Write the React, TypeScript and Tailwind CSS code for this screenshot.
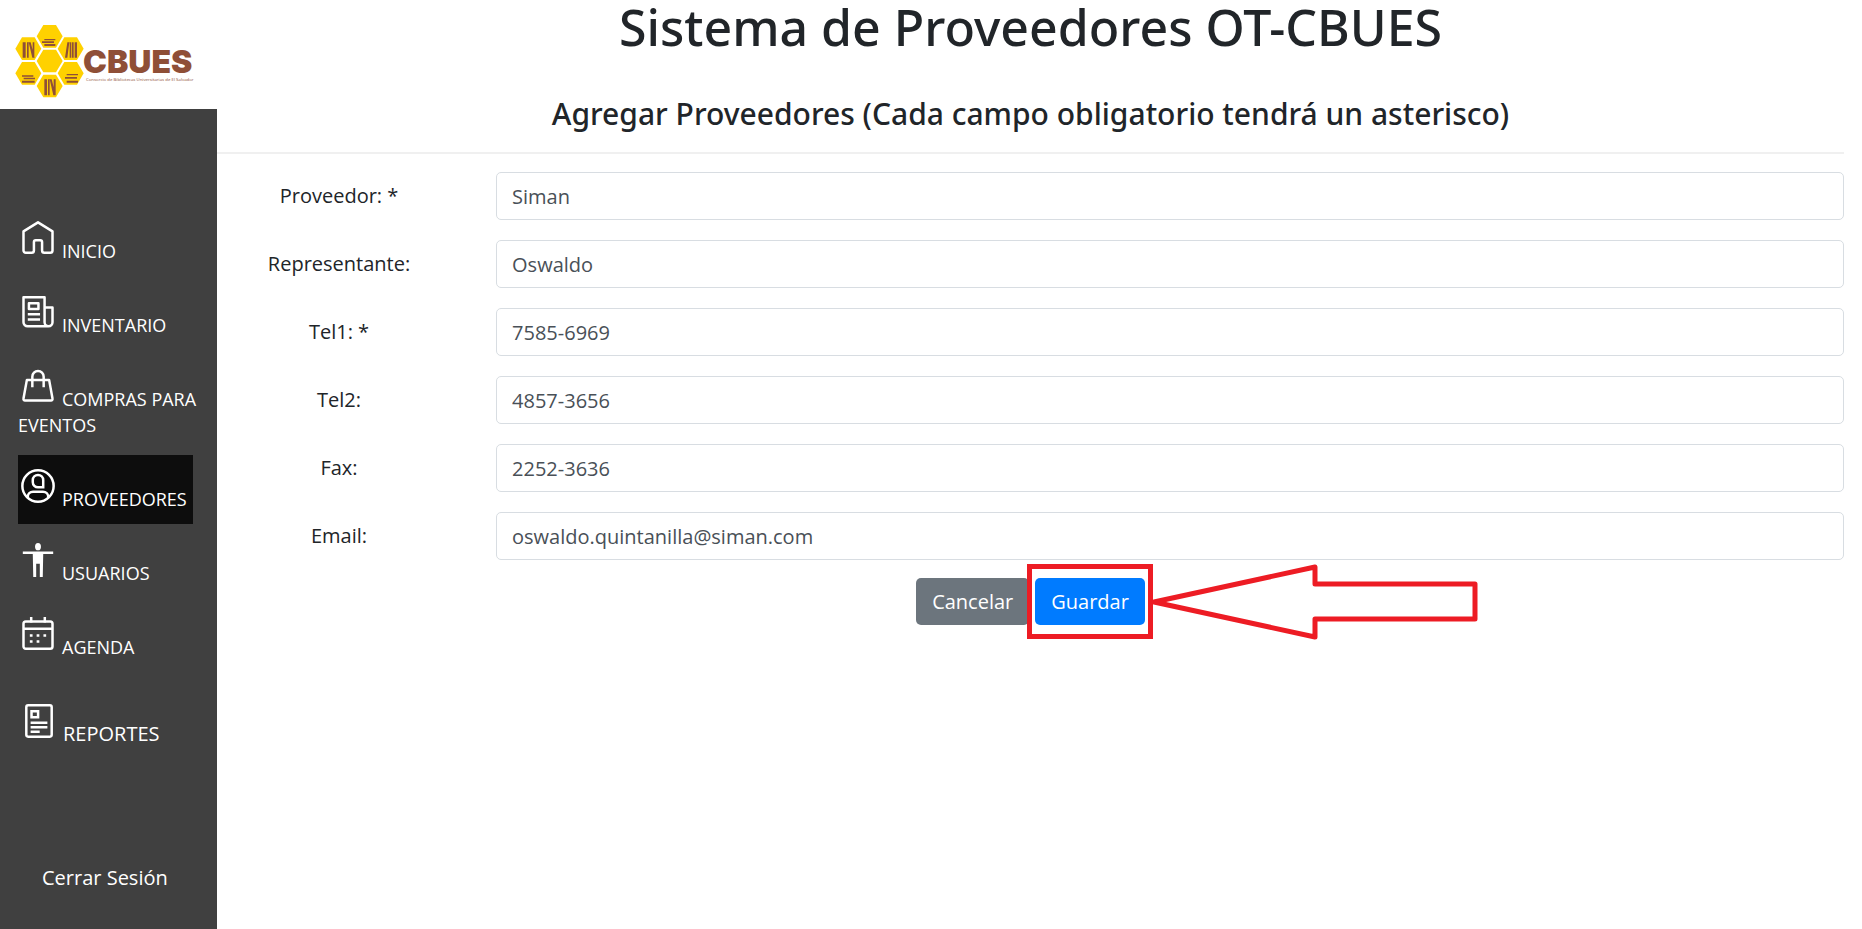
import type { ReactNode } from "react";

const HEXAGONS = [
  [149, 109],
  [85, 146],
  [212, 146],
  [149, 183],
  [85, 220],
  [212, 220],
  [149, 258],
];

function Logo() {
  return (
    <svg viewBox="0 0 651 327" className="h-[109px] w-[217px]" role="img" aria-label="CBUES">
      <g fill="#ffd100">
        {HEXAGONS.map(([x, y]) => (
          <path key={`${x}-${y}`} d={`M${x - 39} ${y}l20 -34h38l20 34l-20 34h-38z`} />
        ))}
      </g>
      <g fill="#8f4f37">
        <path d="M133 117h33v4h-33zM126 124h36v5h-36zM133 132h33v6h-33z" />
        <path d="M68 127h9v46h-9zM81 127h5v46h-5zM86 127h6l12 46h-7zM98 127h5v46h-5z" />
        <path d="M202 127h6l-6 46h-7zM209 127h5v46h-5zM216 127h5v46h-5zM224 127h7v46h-7z" />
        <path d="M66 226h34v4h-34zM71 233h34v5h-34zM66 242h38v6h-38z" />
        <path d="M200 222h34v4h-34zM195 231h36v5h-36zM200 242h34v6h-34z" />
        <path d="M133 238h8v48h-8zM144 238h5v48h-5zM149 238h6l12 48h-7zM161 238h6v48h-6z" />
        <text x="249" y="219" fontSize="96" fontWeight="900" fontFamily="Inter, sans-serif">
          CBUES
        </text>
        <text x="258" y="242" fontSize="13" fontFamily="'Liberation Sans Narrow', 'Open Sans', sans-serif">
          Consorcio de Bibliotecas Universitarias de El Salvador
        </text>
      </g>
    </svg>
  );
}

function Icon({ children }: { children: ReactNode }) {
  return (
    <svg
      viewBox="0 0 15 15"
      fill="none"
      stroke="currentColor"
      strokeWidth="1.1"
      aria-hidden="true"
      className="mr-[7px] ml-[3px] inline-block size-[34px] align-[3px]"
    >
      {children}
    </svg>
  );
}

const homeIcon = (
  <Icon>
    <path
      strokeLinejoin="round"
      d="M7.5.6L1.1 4.6v8.4a1 1 0 0 0 1 1h2.6a1 1 0 0 0 1-1V9.3a.8.8 0 0 1 .8-.8h2a.8.8 0 0 1 .8.8V13a1 1 0 0 0 1 1h2.6a1 1 0 0 0 1-1V4.6z"
    />
  </Icon>
);
const newsIcon = (
  <Icon>
    <path
      strokeLinejoin="round"
      d="M10.4 5.5h3.5V12a1.7 1.7 0 0 1-3.5 0V1H1.1v11a1.8 1.8 0 0 0 1.8 1.8h9.3M3.5 3.6h4.2v2.6H3.5zM3 8.5h5.4M3 10.8h5.4"
    />
  </Icon>
);
const bagIcon = (
  <Icon>
    <path strokeLinejoin="round" d="M2.6 4.8h9.8l1.5 8.2a.7.7 0 0 1-.7.9H1.8a.7.7 0 0 1-.7-.9zM5 8V3.4a2.5 2.5 0 0 1 5 0V8" />
  </Icon>
);
const userIcon = (
  <Icon>
    <circle cx="7.5" cy="7.5" r="6.9" />
    <path d="M3 12.6v-.4c0-1.3 1-2.2 2.3-2.2h4.4c1.3 0 2.3.9 2.3 2.2v.4M5.2 4.9a2.3 2.3 0 0 1 4.6 0v3.2H7.5a2.3 2.3 0 0 1-2.3-2.3z" />
  </Icon>
);
const personIcon = (
  <Icon>
    <ellipse cx="7.5" cy="1.6" rx="1.3" ry="1.6" fill="currentColor" stroke="none" />
    <path
      fill="currentColor"
      stroke="none"
      d="M.8 3.7h13.4v1.2H9.8L9.6 15H8.3V9.2H6.7V15H5.4L5.2 4.9H.8z"
    />
  </Icon>
);
const calendarIcon = (
  <Icon>
    <rect x="1.1" y="2" width="12.8" height="12" rx="1" />
    <path d="M4.5 0v2.4M10.5 0v2.4M1 5.2h13M3.9 8.2h1.2M6.9 8.2h1.2M9.9 8.2h1.2M3.9 10.8h1.2M6.9 10.8h1.2" />
  </Icon>
);
const reportIcon = (
  <Icon>
    <rect x="1.9" y=".6" width="11.2" height="13.8" rx=".8" />
    <path d="M4.2 3.2h2.9v2.6H4.2zM3.8 8.3h7.4M3.8 10.3h7.4M3.8 12.2h4" />
  </Icon>
);

const NAV = [
  { label: "INICIO", icon: homeIcon },
  { label: "INVENTARIO", icon: newsIcon },
  { label: "COMPRAS PARA EVENTOS", icon: bagIcon },
  { label: "PROVEEDORES", icon: userIcon, active: true },
  { label: "USUARIOS", icon: personIcon },
  { label: "AGENDA", icon: calendarIcon },
];

const FIELDS = [
  { id: "proveedor", label: "Proveedor: *", value: "Siman" },
  { id: "representante", label: "Representante:", value: "Oswaldo" },
  { id: "tel1", label: "Tel1: *", value: "7585-6969" },
  { id: "tel2", label: "Tel2:", value: "4857-3656" },
  { id: "fax", label: "Fax:", value: "2252-3636" },
  { id: "email", label: "Email:", value: "oswaldo.quintanilla@siman.com" },
];

export default function App() {
  return (
    <div className="flex min-h-screen bg-white font-['Open_Sans',sans-serif] text-xl text-[#212529]">
      <aside className="flex w-[217px] shrink-0 flex-col">
        <Logo />
        <div className="flex flex-1 flex-col bg-[#404040] pt-[98px] text-white">
          <nav className="flex flex-col gap-[5px] pr-3 pl-[18px] text-[18px] leading-[26px]">
            {NAV.map((item) => (
              <a
                key={item.label}
                href="#"
                aria-current={item.active ? "page" : undefined}
                className={item.active ? "mr-3 bg-[#0d0d0d] pt-3.5 pb-3" : "pt-3.5 pb-3"}
              >
                {item.icon}
                {item.label}
              </a>
            ))}
            <a href="#" className="pt-[27px] pl-px text-xl leading-[26px]">
              {reportIcon}
              REPORTES
            </a>
          </nav>
          <a href="#" className="mt-auto pb-9 pl-[42px] leading-[30px]">
            Cerrar Sesión
          </a>
        </div>
      </aside>

      <main className="min-w-0 flex-1 pr-[18px]">
        <h1 className="text-center font-['Noto_Sans','Open_Sans',sans-serif] text-[50px] leading-[54px] font-medium">
          Sistema de Proveedores OT-CBUES
        </h1>
        <h2 className="mt-[42px] text-center font-['Noto_Sans','Open_Sans',sans-serif] text-[30px] leading-9 font-medium">
          Agregar Proveedores (Cada campo obligatorio tendrá un asterisco)
        </h2>
        <hr className="mt-5 border-t-2 border-[#f0f0f0]" />
        <form className="mt-[18px] flex flex-col gap-5" onSubmit={(e) => e.preventDefault()}>
          {FIELDS.map((f) => (
            <div key={f.id} className="flex items-center gap-[35px]">
              <label htmlFor={f.id} className="w-[15%] text-center">
                {f.label}
              </label>
              <input
                id={f.id}
                type="text"
                defaultValue={f.value}
                className="h-12 min-w-0 flex-1 rounded-[5px] border border-[#d8dde2] px-[15px] text-[#495057]"
              />
            </div>
          ))}
          <div className="-mt-0.5 flex justify-center gap-1.5">
            <button type="button" className="h-[47px] rounded-[5px] bg-[#6c757d] px-4 text-white">
              Cancelar
            </button>
            <div className="relative">
              <button type="submit" className="h-[47px] rounded-[5px] bg-[#007bff] px-4 text-white">
                Guardar
              </button>
              <div className="pointer-events-none absolute -inset-x-2 -top-3.5 -bottom-3.5 border-[5px] border-[#ed1c24]" />
              <svg
                viewBox="0 0 328 78"
                fill="none"
                stroke="#ed1c24"
                strokeWidth="5"
                aria-hidden="true"
                className="pointer-events-none absolute -top-[15px] left-full ml-[5px] h-[78px] w-[328px]"
              >
                <path strokeLinejoin="round" d="M4 39L165 4V21H325V56H165V74z" />
              </svg>
            </div>
          </div>
        </form>
      </main>
    </div>
  );
}
